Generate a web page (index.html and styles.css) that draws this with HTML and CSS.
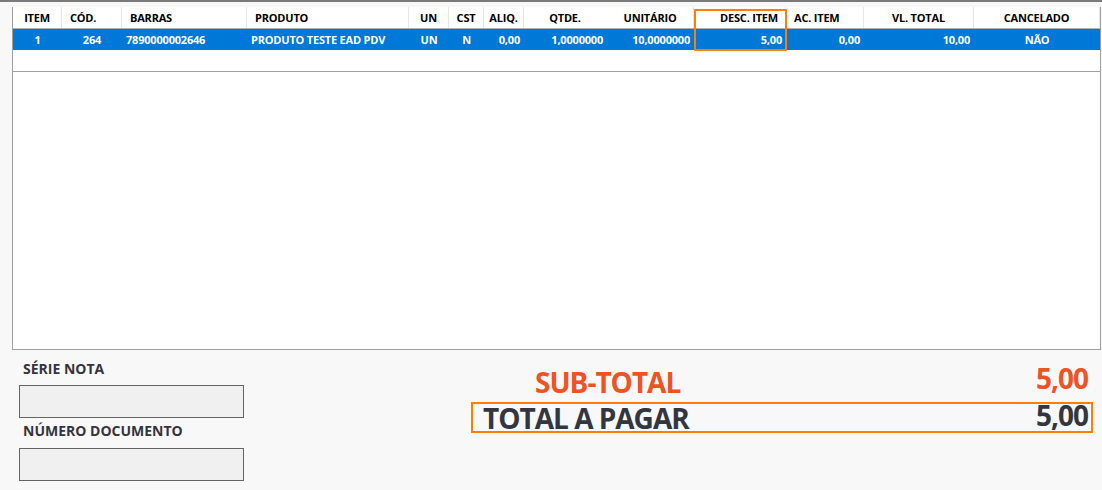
FILE: index.html
```html
<!DOCTYPE html>
<html>
<head>
<meta charset="utf-8">
<link rel="stylesheet" href="styles.css">
</head>
<body>
<div class="topline"></div>
<div class="grid">
  <div class="row head">
    <div class="c c-item ctr">ITEM</div>
    <div class="c c-cod lft">CÓD.</div>
    <div class="c c-bar lft">BARRAS</div>
    <div class="c c-prod lft">PRODUTO</div>
    <div class="c c-un ctr">UN</div>
    <div class="c c-cst ctr">CST</div>
    <div class="c c-aliq ctr">ALIQ.</div>
    <div class="c c-qtde ctr nosep">QTDE.</div>
    <div class="c c-unit ctr">UNITÁRIO</div>
    <div class="c c-desc rgt">DESC. ITEM</div>
    <div class="c c-ac lft">AC. ITEM</div>
    <div class="c c-vl ctr">VL. TOTAL</div>
    <div class="c c-canc ctr">CANCELADO</div>
  </div>
  <div class="row sel">
    <div class="c ctr">1</div>
    <div class="c ctr">264</div>
    <div class="c lft">7890000002646</div>
    <div class="c lft">PRODUTO TESTE EAD PDV</div>
    <div class="c ctr">UN</div>
    <div class="c ctr">N</div>
    <div class="c rgt">0,00</div>
    <div class="c rgt">1,0000000</div>
    <div class="c rgt">10,0000000</div>
    <div class="c rgt">5,00</div>
    <div class="c rgt">0,00</div>
    <div class="c rgt">10,00</div>
    <div class="c ctr">NÃO</div>
  </div>
  <div class="row empty"></div>
  <div class="hl"></div>
</div>
<div class="bottom">
  <div class="fields">
    <div class="lbl">SÉRIE NOTA</div>
    <div class="inp"></div>
    <div class="lbl lbl2">NÚMERO DOCUMENTO</div>
    <div class="inp"></div>
  </div>
  <div class="totals">
    <div class="subrow">
      <span class="sublbl">SUB-TOTAL</span>
      <span class="subval">5,00</span>
    </div>
    <div class="totbox">
      <span class="totlbl">TOTAL A PAGAR</span>
      <span class="totval">5,00</span>
    </div>
  </div>
</div>
</body>
</html>
```
FILE: styles.css
```css
html, body {
  margin: 0;
  padding: 0;
}
body {
  width: 1102px;
  height: 490px;
  background: #f8f8f8;
  font-family: "Open Sans", "Noto Sans", sans-serif;
  overflow: hidden;
}
.topline {
  height: 2px;
  background: #7a7a7a;
}
.grid {
  margin: 5px 0 0 12px;
  width: 1087px;
  height: 342px;
  border: 1px solid #a0a0a0;
  border-top: none;
  background: #ffffff;
  position: relative;
}
.row {
  display: grid;
  grid-template-columns: 49px 60px 125px 162px 40px 35px 40px 83px 87px 92px 78px 110px 1fr;
  height: 21px;
  align-items: center;
}
.c {
  font-size: 11px;
  font-weight: 700;
  line-height: 21px;
  height: 21px;
  white-space: nowrap;
  overflow: hidden;
  letter-spacing: -0.2px;
}
.head {
  color: #000;
  border-bottom: 1px solid #b0b0b0;
}
.head .c {
  border-right: 1px solid #e6e6e6;
  box-sizing: border-box;
}
.head .c.nosep {
  border-right-color: transparent;
}
.head .lft { padding-left: 8px; }
.head .rgt { padding-right: 7px; }
.ctr { text-align: center; }
.lft { text-align: left; }
.rgt { text-align: right; }
.sel {
  background: #0078d7;
  color: #ffffff;
}
.sel .lft { padding-left: 4px; }
.sel .rgt { padding-right: 4px; }
.empty {
  height: 21px;
  border-bottom: 1px solid #a0a0a0;
}
.hl {
  position: absolute;
  left: 681px;
  top: 2px;
  width: 89px;
  height: 38px;
  border: 2px solid #ff8000;
  border-radius: 1px;
}
.bottom {
  display: flex;
  color: #34343e;
}
.fields {
  padding: 10px 0 0 19px;
  width: 452px;
}
.lbl {
  font-size: 14px;
  font-weight: 700;
  line-height: 18px;
  padding-left: 4px;
  margin-bottom: 7px;
}
.lbl2 {
  margin-top: 4px;
  margin-bottom: 8px;
}
.inp {
  width: 223px;
  height: 31px;
  background: #f0f0f0;
  border: 1px solid #646464;
}
.totals {
  padding-top: 17px;
  width: 622px;
}
.subrow {
  display: flex;
  justify-content: space-between;
  align-items: flex-start;
  color: #f05323;
  font-weight: 700;
  height: 35px;
  padding: 0 5px 0 64px;
}
.sublbl, .subval, .totlbl, .totval {
  font-size: 28px;
  line-height: 30px;
  letter-spacing: -1px;
}
.sublbl {
  margin-top: 0;
}
.subval {
  margin-top: -4px;
}
.totbox {
  height: 27px;
  border: 2px solid #ff8000;
  display: flex;
  justify-content: space-between;
  align-items: flex-start;
  padding: 0 3px 0 10px;
  font-weight: 700;
  color: #33363f;
}
.totlbl {
  height: 27px;
  margin-top: -1px;
}
.totval {
  height: 27px;
  margin-top: -4px;
}
```
